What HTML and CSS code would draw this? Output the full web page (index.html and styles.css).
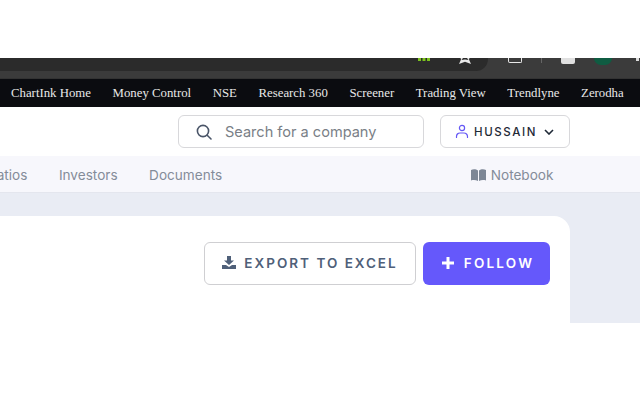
FILE: index.html
```html
<!DOCTYPE html>
<html lang="en">
<head>
<meta charset="utf-8">
<title>Company</title>
<link rel="stylesheet" href="styles.css">
</head>
<body>
<div class="top-blank"></div>
<div class="chrome">
  <div class="omnibox">
    <svg class="ext" width="12" height="3" viewBox="0 0 12 3" fill="#7cc21f"><rect x="0" y="0" width="3" height="3"/><rect x="4.500" y="0" width="3" height="3"/><rect x="9" y="0" width="3" height="3"/></svg>
    <svg class="star" width="14" height="6" viewBox="0 0 14 6"><path d="M2.500 0H5L3.500 2 7 1.500 10.500 2 9 0h2.500L11 1.500 13 6 7 3.800 1 6 3 1.500Z" fill="#e8e8e8"/></svg>
  </div>
  <div class="chrome-icons">
    <span class="win-icon"></span>
    <span class="sep"></span>
    <span class="puzzle"></span>
    <span class="avatar"></span>
    <span class="dots"></span>
  </div>
</div>
<nav class="bookmarks">
  <a>ChartInk Home</a><a>Money Control</a><a>NSE</a><a>Research 360</a><a>Screener</a><a>Trading View</a><a>Trendlyne</a><a>Zerodha</a>
</nav>
<header class="site-head">
  <div class="search">
    <svg width="18" height="18" viewBox="0 0 18 18" fill="none" stroke="#4a5568" stroke-width="1.6" stroke-linecap="round"><circle cx="8" cy="8" r="5.6"/><path d="M12.200 12.200 16 16"/></svg>
    <span>Search for a company</span>
  </div>
  <div class="user">
    <svg width="14" height="15" viewBox="0 0 14 15" fill="none" stroke="#6558f5" stroke-width="1.200" stroke-linecap="round"><circle cx="7" cy="4" r="2.600"/><path d="M1.500 13.500V12.500a3.500 3.500 0 0 1 3.500-3.500h4a3.500 3.500 0 0 1 3.500 3.500v1"/></svg>
    <span class="user-name">HUSSAIN</span>
    <svg width="10" height="6" viewBox="0 0 10 6" fill="none" stroke="#1f2937" stroke-width="1.600"><path d="M1 1l4 4 4-4"/></svg>
  </div>
</header>
<div class="tabs">
  <a class="cut">Ratios</a><a>Investors</a><a>Documents</a>
  <a class="notebook">
    <svg width="15" height="12" viewBox="0 0 15 12" fill="#7d8796"><path d="M0 1c2-1 5-1 7 .5V12C5 10.800 2 10.800 0 11.500ZM15 1c-2-1-5-1-7 .5V12c2-1.200 5-1.200 7-.5Z"/></svg>
    Notebook
  </a>
</div>
<main class="page">
  <section class="card">
    <button class="btn btn-out">
      <svg width="14" height="13" viewBox="0 0 14 13" fill="#4f6079"><path d="M5 0h4v4.500h3L7 9 2 4.500h3ZM0 9h4l3 2 3-2h4v4H0Z"/></svg>
      EXPORT TO EXCEL
    </button>
    <button class="btn btn-fill">
      <svg width="12" height="12" viewBox="0 0 12 12" fill="#fff"><path d="M4.500 0h3v4.500H12v3H7.500V12h-3V7.500H0v-3h4.500Z"/></svg>
      FOLLOW
    </button>
  </section>
</main>
</body>
</html>
```
FILE: styles.css
```css
* { box-sizing: border-box; }
html, body { margin: 0; padding: 0; background: #fff; }
body { width: 640px; height: 400px; overflow: hidden; font-family: Inter, "Liberation Sans", sans-serif; }
.top-blank { height: 58px; background: #fff; }
.chrome { height: 21px; background: #3b3b3b; display: flex; align-items: flex-start; border-bottom: 1px solid #333; }
.omnibox { width: 488px; height: 13px; background: #2b2b2b; border-bottom-right-radius: 12px; flex: none; display: flex; justify-content: flex-end; padding-right: 16px; gap: 28px; }
.chrome-icons { flex: 1; display: flex; align-items: flex-start; }
.win-icon { width: 14px; height: 5px; margin-left: 20px; border: 1px solid #e8e8e8; border-top: 0; border-radius: 0 0 2px 2px; }
.sep { width: 1px; height: 5px; margin-left: 19px; background: #666; }
.puzzle { width: 14px; height: 6px; margin-left: 19px; background: #e0e0e0; border-radius: 0 0 2px 2px; }
.avatar { width: 18px; height: 7px; margin-left: 19px; background: #0f5c42; border-radius: 0 0 9px 9px; }
.dots { width: 3px; height: 3px; margin: 0 0 0 24px; background: #ddd; }
.bookmarks { height: 28px; background: #0b0c10; display: flex; align-items: center; padding: 1px 0 0 11px; gap: 21.600px; font: 12.800px "Liberation Serif", serif; color: #e8e8e8; white-space: nowrap; }
.site-head { height: 49px; display: flex; align-items: center; padding-left: 178px; background: #fff; }
.search { width: 246px; height: 33px; border: 1px solid #d8d8db; border-radius: 6px; display: flex; align-items: center; padding-left: 16px; gap: 12px; font-size: 14.550px; color: #7a7f87; }
.user { width: 130px; height: 33px; margin-left: 16px; border: 1px solid #d8d8db; border-radius: 6px; display: flex; align-items: center; padding-left: 14px; color: #1f2937; }
.user-name { font-size: 11.500px; font-weight: 500; letter-spacing: 1.600px; margin: 0 7px 0 5px; }
.tabs { height: 37px; background: #f7f7fc; display: flex; align-items: center; gap: 31.500px; font-size: 13.600px; color: #848c99; padding-top: 2px; border-bottom: 1px solid #e4e6ee; }
.tabs .cut { margin-left: -12px; }
.notebook { margin-left: 217px; display: flex; align-items: center; gap: 5px; }
.page { height: 130px; background: #e9ecf4; padding-top: 23px; }
.card { width: 570px; height: 107px; background: #fff; border-top-right-radius: 16px; display: flex; justify-content: flex-end; align-items: flex-start; gap: 7px; padding: 26px 20px 0 0; }
.btn { height: 43px; border-radius: 6px; display: flex; align-items: center; justify-content: center; font: 600 13.500px Inter, sans-serif; letter-spacing: 2px; padding: 0 0 2px; cursor: pointer; }
.btn-out { width: 212px; background: #fff; border: 1px solid #cfcfd2; color: #4f6079; gap: 8px; }
.btn-fill { width: 127px; background: #6558fb; border: 0; color: #fff; gap: 10px; letter-spacing: 2.200px; padding-left: 3px; }
```
